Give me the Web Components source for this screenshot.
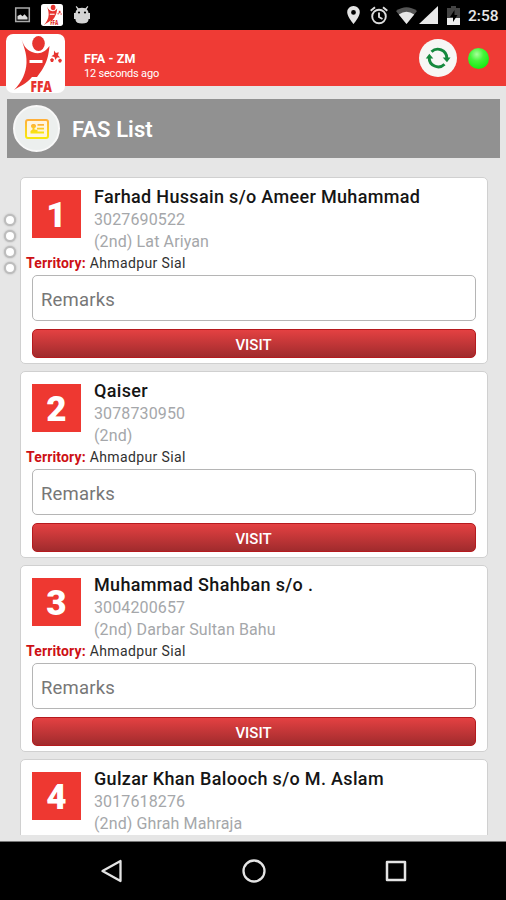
<!DOCTYPE html>
<html lang="en">
<head>
<meta charset="utf-8">
<title>FFA - ZM</title>
<style>
  body {
    background: #e6e6e6;
    font-family: Roboto, sans-serif;
    margin: 0;
  }
</style>
</head>
<body>
<ffa-app>
  <ffa-status-bar slot="status" time="2:58"></ffa-status-bar>
  <ffa-header slot="header" label="FFA - ZM" updated="12 seconds ago"></ffa-header>
  <ffa-title slot="title">FAS List</ffa-title>
  <ffa-card number="1" name="Farhad Hussain s/o Ameer Muhammad" phone="3027690522" place="(2nd) Lat Ariyan" territory="Ahmadpur Sial"></ffa-card>
  <ffa-card number="2" name="Qaiser" phone="3078730950" place="(2nd)" territory="Ahmadpur Sial"></ffa-card>
  <ffa-card number="3" name="Muhammad Shahban s/o ." phone="3004200657" place="(2nd) Darbar Sultan Bahu" territory="Ahmadpur Sial"></ffa-card>
  <ffa-card peek number="4" name="Gulzar Khan Balooch s/o M. Aslam" phone="3017618276" place="(2nd) Ghrah Mahraja"></ffa-card>
  <ffa-nav-bar slot="nav"></ffa-nav-bar>
</ffa-app>

<script>
class FFAElement extends HTMLElement {
  constructor() {
    super();
    const template = document.createElement( 'template' );
    template.innerHTML = this.constructor.markup;
    this.attachShadow( {mode: 'open'} );
    this.shadowRoot.appendChild( template.content.cloneNode( true ) );
  }

  // Copy attributes into matching parts
  connectedCallback() {
    this.shadowRoot.querySelectorAll( '[data-text]' ).forEach( ( element ) => {
      element.textContent = this.getAttribute( element.dataset.text );
    } );
  }
}

class FFALogo extends FFAElement {
  static markup = /* template */ `
    <style>
      :host {
        background: #ffffff;
        border-radius: 12%;
        display: block;
        flex-shrink: 0;
        height: var( --logo-size, 59px );
        width: var( --logo-size, 59px );
      }

      svg {
        display: block;
        height: 100%;
        overflow: visible;
        width: 100%;
      }
    </style>
    <svg viewBox="0 0 59 59" fill="#e7342f">
      <ellipse cx="32.500" cy="9.500" rx="6.300" ry="7.500"/>
      <path d="M15 3C16.500 10 20 16 26 18C34 21 39 18 43.500 12C42.500 22 41 28 36 36L31 43H26C20 50 14 52 8 56C16 48 20 39 20.500 29C21 18 17 12 15 3Z"/>
      <path fill="#fff" d="M23.500 26h13v3h-13z"/>
      <path d="M48 16.500l1.800 2.500 3-.8-.8 3 2 2.200-3 .2-1.600 2.300-1-3-3-.7 2.500-1.700zM44 25.500l2-1.500 2 1.500-1 2.500h-2zM52 26l2-1.500 2 1.500-1 2.500h-2z"/>
      <text x="24.500" y="57.500" font-family="Open Sans, sans-serif" font-size="16.500" font-weight="800" textLength="21.500" lengthAdjust="spacingAndGlyphs">FFA</text>
    </svg>
  `;
}

class FFAStatusBar extends FFAElement {
  static markup = /* template */ `
    <style>
      :host {
        align-items: center;
        background: #000000;
        box-sizing: border-box;
        color: #e6e6e6;
        display: flex;
        height: 30px;
        padding: 0 8px 0 14px;
      }

      svg {
        display: block;
        flex-shrink: 0;
      }

      ffa-logo {
        --logo-size: 22px;
        margin: 0 11px 0 10px;
      }

      .space {
        flex-grow: 1;
      }

      .pin { margin-right: 10px; }
      .alarm { margin-right: 8px; }
      .wifi { margin-right: 2px; }
      .signal { margin-right: 9px; }
      .battery { margin-right: 8px; }

      span {
        font-size: 15.5px;
        font-weight: 500;
        line-height: 30px;
        padding-top: 1px;
        height: 29px;
        width: 30px;
      }
    </style>
    <svg width="17" height="16" viewBox="0 0 17 16"><path fill="none" stroke="#aaa" stroke-width="1.500" d="M1.700.9h13.600v13.700H1.700z"/><path fill="#ddd" d="M3.500 12.500V9l3-1.500 2 1.700 2-2 3 3.300v2z"/></svg>
    <ffa-logo></ffa-logo>
    <svg width="16" height="20" viewBox="0 0 16 20"><path fill="#d5d5d5" d="M2.500 1l2 2.300Q8 2 11.500 3.300l2-2.300.8.8-1.600 2.500Q14.500 6 14.500 8H16v6h-1.500v1Q14 18.500 8 18.500T1.500 15v-1H0V8h1.500q0-2 1.800-3.700L1.700 1.800z"/><circle cx="5" cy="7.500" r="1.100"/><circle cx="11" cy="7.500" r="1.100"/></svg>
    <div class="space"></div>
    <svg class="pin" width="13" height="18" viewBox="0 0 13 18"><path fill="#e4e4e4" fill-rule="evenodd" d="M6.500 0A6.200 6.200 0 0 0 .2 6.300C.2 11 6.500 18 6.500 18s6.300-7 6.300-11.700A6.200 6.200 0 0 0 6.500 0zm0 4a2.400 2.400 0 1 1 0 4.800 2.400 2.400 0 0 1 0-4.800z"/></svg>
    <svg class="alarm" width="18" height="19" viewBox="0 0 18 19" fill="none" stroke="#ddd" stroke-width="1.900"><circle cx="9" cy="10.500" r="6.800"/><path d="M.7 4.800L5 1.200M17.300 4.800L13 1.200M9 6.500V11l3.500 2"/></svg>
    <svg class="wifi" width="21" height="17" viewBox="0 0 21 17"><path fill="#555" d="M0 4Q10.500-3.500 21 4L10.500 17z"/><path fill="#e8e8e8" d="M2.800 7.500Q10.500 2 18.200 7.500L10.500 17z"/></svg>
    <svg class="signal" width="19" height="18" viewBox="0 0 19 18"><path fill="#e8e8e8" d="M0 18L19 0v18z"/></svg>
    <svg class="battery" width="13" height="19" viewBox="0 0 13 19"><path fill="#444" d="M4 0h5v2h4v17H0V2h4z"/><path fill="#eee" d="M0 12h13v7H0z"/><path d="M7.500 4L3 11h3v5l4.500-7h-3z"/></svg>
    <span data-text="time"></span>
  `;
}

class FFAHeader extends FFAElement {
  static markup = /* template */ `
    <style>
      :host {
        background: #ef3b35;
        box-sizing: border-box;
        color: #ffffff;
        display: flex;
        height: 56px;
        padding: 0 17px 0 6px;
      }

      ffa-logo {
        height: 59px;
        margin-top: 4px;
        z-index: 1;
      }

      .label {
        flex-grow: 1;
        padding: 21px 0 0 19px;
      }

      p {
        font-size: 12.5px;
        font-weight: 700;
        letter-spacing: 0.1px;
        line-height: 16px;
        margin: 0;
      }

      p + p {
        font-size: 11px;
        font-weight: 400;
        letter-spacing: -0.2px;
        line-height: 14px;
      }

      .sync {
        align-items: center;
        background: #f7f7f5;
        border-radius: 50%;
        display: flex;
        height: 38px;
        justify-content: center;
        margin: 9px 11px 0 0;
        width: 38px;
      }

      .online {
        background: radial-gradient( circle at 42% 30%, #a8ff9c 0, #45f53b 35%, #16ed12 75% );
        border-radius: 50%;
        height: 21px;
        margin-top: 18px;
        width: 21px;
      }
    </style>
    <ffa-logo></ffa-logo>
    <div class="label">
      <p data-text="label"></p>
      <p data-text="updated"></p>
    </div>
    <div class="sync">
      <svg width="26" height="24" viewBox="0 0 26 24"><path fill="none" stroke="#15893d" stroke-width="2.900" d="M6.500 5.800A9 9 0 0 1 21.800 12M4.200 11.500A9 9 0 0 0 19.500 18.200"/><path fill="#15893d" d="M.8 12.500L4.300 7.800l4 4.700zM17.700 11.500h7.800L22 16.200z"/></svg>
    </div>
    <div class="online"></div>
  `;
}

class FFATitle extends FFAElement {
  static markup = /* template */ `
    <style>
      :host {
        align-items: center;
        background: #919191;
        box-sizing: border-box;
        color: #ffffff;
        display: flex;
        font-size: 22px;
        font-weight: 600;
        gap: 12px;
        height: 59px;
        letter-spacing: 0.1px;
        margin: 13px 6px 0 7px;
        padding-left: 6px;
      }

      div {
        align-items: center;
        background: #ecefee;
        border: solid 2px #f8f8f8;
        border-radius: 50%;
        box-sizing: border-box;
        display: flex;
        height: 47px;
        justify-content: center;
        width: 47px;
      }

      span {
        padding-top: 2px;
      }
    </style>
    <div>
      <svg width="24" height="20" viewBox="0 0 24 20">
        <defs><linearGradient id="gold" x2="0" y2="1"><stop stop-color="#ffb03a"/><stop offset="1" stop-color="#f8e80c"/></linearGradient></defs>
        <rect x="1" y="1" width="22" height="18" rx="2" fill="#fff5df" stroke="url( #gold )" stroke-width="2"/>
        <path fill="url( #gold )" d="M8.500 5a2 2 0 0 1 1 4v1.500l3 .5v3.500H5.500V12l2-1.500V9a2 2 0 0 1 1-4zM12.500 5H19v1.800h-6.500zM12 8.800h7v1.800h-7zM12.500 12.600H19v1.900h-6.500z"/>
      </svg>
    </div>
    <span><slot></slot></span>
  `;
}

class FFACard extends FFAElement {
  static markup = /* template */ `
    <style>
      :host {
        background: #ffffff;
        border: solid 1.5px #d0d0d0;
        border-radius: 5px;
        box-sizing: border-box;
        display: block;
        flex-shrink: 0;
        height: 187px;
        padding: 7px 11px 0;
      }

      /* Last row in view, only its heading shows */
      :host( [peek] ) .territory,
      :host( [peek] ) input,
      :host( [peek] ) button {
        display: none;
      }

      header {
        display: flex;
        gap: 13px;
        height: 68px;
      }

      .number {
        background: #ee3831;
        color: #ffffff;
        font-size: 35px;
        font-weight: 900;
        height: 48px;
        line-height: 52px;
        margin-top: 5px;
        text-align: center;
        width: 49px;
      }

      h2 {
        color: #151515;
        font-size: 18px;
        font-weight: 500;
        letter-spacing: 0.33px;
        line-height: 24px;
        margin: 0;
        white-space: nowrap;
      }

      p {
        color: #a5a7aa;
        font-size: 16px;
        letter-spacing: 0.12px;
        line-height: 22px;
        margin: 0;
      }

      .territory {
        color: #303030;
        font-size: 14px;
        letter-spacing: 0.38px;
        line-height: 20px;
        margin-left: -6px;
      }

      .territory b {
        color: #cd1015;
        font-weight: 700;
        letter-spacing: 0.15px;
      }

      input {
        background: #ffffff;
        border: solid 1.5px #b5b5b5;
        border-radius: 5px;
        box-sizing: border-box;
        display: block;
        font: 18.5px Roboto, sans-serif;
        height: 46px;
        letter-spacing: 0.2px;
        margin: 2px 0 8px;
        padding: 3px 8px 0;
        width: 100%;
      }

      input::placeholder {
        color: #777777;
      }

      button {
        appearance: none;
        background: linear-gradient( #e44142, #a02b2d );
        border: solid 1px #b51a1e;
        border-radius: 5px;
        color: #ffffff;
        display: block;
        font: 500 15px Roboto, sans-serif;
        height: 29px;
        padding: 2px 1px 0 0;
        width: 100%;
      }
    </style>
    <header>
      <div class="number" data-text="number"></div>
      <div>
        <h2 data-text="name"></h2>
        <p data-text="phone"></p>
        <p data-text="place"></p>
      </div>
    </header>
    <p class="territory"><b>Territory:</b> <span data-text="territory"></span></p>
    <input type="text" placeholder="Remarks">
    <button type="button">VISIT</button>
  `;

  // Rows in peek state carry no actions
  connectedCallback() {
    super.connectedCallback();
    if( this.hasAttribute( 'peek' ) ) {
      this.shadowRoot.querySelectorAll( '.territory, input, button' ).forEach( ( element ) => element.remove() );
    }
  }
}

class FFANavBar extends FFAElement {
  static markup = /* template */ `
    <style>
      :host {
        align-items: center;
        background: #000000;
        border-top: solid 1px #777777;
        box-sizing: border-box;
        display: flex;
        gap: 118px;
        height: 59px;
        justify-content: center;
        padding-left: 2px;
      }

      svg {
        display: block;
      }
    </style>
    <svg width="24" height="24" viewBox="0 0 24 24"><path fill="none" stroke="#e4e4e4" stroke-width="2.300" stroke-linejoin="round" d="M20.500 2v20L2.500 12z"/></svg>
    <svg width="24" height="24" viewBox="0 0 24 24"><circle cx="12" cy="12" r="10.500" fill="none" stroke="#e4e4e4" stroke-width="2.300"/></svg>
    <svg width="24" height="24" viewBox="0 0 24 24"><path fill="none" stroke="#e4e4e4" stroke-width="2.500" stroke-linejoin="round" d="M3 3h18v18H3z"/></svg>
  `;
}

class FFAApp extends FFAElement {
  static markup = /* template */ `
    <style>
      :host {
        background: #e6e6e6;
        display: flex;
        flex-direction: column;
        height: 900px;
        overflow: hidden;
        position: relative;
        width: 506px;
      }

      ::slotted( * ) {
        flex-shrink: 0;
      }

      main {
        display: flex;
        flex-direction: column;
        flex-grow: 1;
        gap: 7px;
        margin: 19px 18px 6px 20px;
        min-height: 0;
        overflow: hidden;
      }

      /* Drawer handle over the left edge of the list */
      aside {
        display: flex;
        flex-direction: column;
        gap: 4px;
        left: 4px;
        position: absolute;
        top: 214px;
      }

      aside i {
        background: #ffffff;
        border: solid 2px #bdbdbd;
        border-radius: 50%;
        box-shadow: 0 0 2px #aaaaaa;
        box-sizing: border-box;
        height: 12px;
        width: 12px;
      }
    </style>
    <slot name="status"></slot>
    <slot name="header"></slot>
    <slot name="title"></slot>
    <main><slot></slot></main>
    <slot name="nav"></slot>
    <aside><i></i><i></i><i></i><i></i></aside>
  `;
}

window.customElements.define( 'ffa-logo', FFALogo );
window.customElements.define( 'ffa-status-bar', FFAStatusBar );
window.customElements.define( 'ffa-header', FFAHeader );
window.customElements.define( 'ffa-title', FFATitle );
window.customElements.define( 'ffa-card', FFACard );
window.customElements.define( 'ffa-nav-bar', FFANavBar );
window.customElements.define( 'ffa-app', FFAApp );
</script>
</body>
</html>
